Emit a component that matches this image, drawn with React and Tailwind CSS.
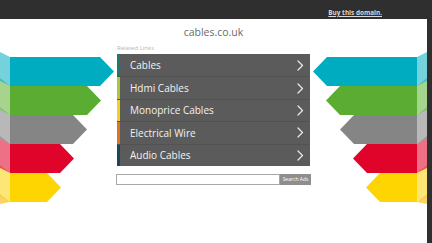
import React from "react";

const rows = [
  { label: "Cables", bar: "#1e7a6a" },
  { label: "Hdmi Cables", bar: "#a8c83a" },
  { label: "Monoprice Cables", bar: "#f2d21a" },
  { label: "Electrical Wire", bar: "#e07420" },
  { label: "Audio Cables", bar: "#17495a" },
];

const arrows = [
  { c: "#00adc0", l: "#74d2dc", m: "#3fb9b8", tipL: 114, tipR: 2 },
  { c: "#5aad32", l: "#a6d48c", m: "#7fba70", tipL: 101, tipR: 15 },
  { c: "#858585", l: "#b8b8b8", m: "#9a8f8f", tipL: 87, tipR: 29 },
  { c: "#e0042a", l: "#ee7086", m: "#e8503a", tipL: 74, tipR: 42 },
  { c: "#fed500", l: "#fee676", m: "#f8c840", tipL: 61, tipR: 55 },
];

function LeftArrows() {
  return (
    <svg width="116" height="224" viewBox="0 0 116 224" className="shrink-0">
      {arrows.map((a, i) => {
        const t = 38 + i * 29;
        const b = t + 29;
        const mid = t + 14.5;
        return (
          <g key={i}>
            <polygon points={`0,${t - 5} 10,${t} 10,${b} 0,${b - 5}`} fill={a.l} />
            <polygon points={`0,${b - 8} 10,${b} 0,${b + 2}`} fill={a.m} opacity="0.8" />
            <polygon
              points={`10,${t} ${a.tipL - 14},${t} ${a.tipL},${mid} ${a.tipL - 14},${b} 10,${b}`}
              fill={a.c}
            />
          </g>
        );
      })}
    </svg>
  );
}

function RightArrows() {
  return (
    <svg width="116" height="224" viewBox="0 0 116 224" className="shrink-0">
      {arrows.map((a, i) => {
        const t = 38 + i * 29;
        const b = t + 29;
        const mid = t + 14.5;
        return (
          <g key={i}>
            <polygon points={`106,${t} 116,${t - 5} 116,${b - 5} 106,${b}`} fill={a.l} />
            <polygon points={`116,${b - 8} 106,${b} 116,${b + 2}`} fill={a.m} opacity="0.8" />
            <polygon
              points={`106,${t} ${a.tipR + 14},${t} ${a.tipR},${mid} ${a.tipR + 14},${b} 106,${b}`}
              fill={a.c}
            />
          </g>
        );
      })}
    </svg>
  );
}

function Chevron() {
  return (
    <svg width="8" height="11" viewBox="0 0 8 11" fill="none">
      <path d="M2 1 L6.5 5.5 L2 10" stroke="#e8e8e8" strokeWidth="1.3" strokeLinecap="round" strokeLinejoin="round" />
    </svg>
  );
}

export default function App() {
  return (
    <div
      className="w-[432px] h-[243px] bg-[#2f2f2f] flex flex-col overflow-hidden"
      style={{ fontFamily: '"Open Sans", "Noto Sans", sans-serif' }}
    >
      <div className="h-[19px] shrink-0 flex justify-end pr-[50px] pt-[8px]">
        <span className="text-[6.4px] leading-[9px] font-bold text-[#d8d8d8] underline">Buy this domain.</span>
      </div>
      <div className="flex flex-1 pr-[5px]">
        <div className="flex flex-1 bg-white">
          <LeftArrows />
          <div className="w-[195px] flex flex-col items-stretch">
            <div className="pt-[6px] h-[19px] text-center text-[10.5px] leading-[14px] text-[#6b6b6b]">cables.co.uk</div>
            <div className="mt-[6px] pl-[1px] text-[6px] leading-[8px] text-[#b5b5b5]">Related Links</div>
            <div className="mt-[2px] ml-[1px] mr-[1px] bg-[#5b5b5b] flex flex-col">
              {rows.map((r, i) => (
                <div
                  key={i}
                  className={`h-[22.4px] flex items-center ${i > 0 ? "border-t border-[#525252]" : ""}`}
                >
                  <div className="w-[3px] h-full" style={{ backgroundColor: r.bar }} />
                  <span className="ml-[10px] flex-1 text-[10px] leading-[12px] text-[#f2f2f2]">{r.label}</span>
                  <div className="mr-[6px]">
                    <Chevron />
                  </div>
                </div>
              ))}
            </div>
            <div className="mt-[8px] flex h-[11px]">
              <div className="flex-1 border border-[#a8a8a8] bg-white" />
              <div className="w-[31px] bg-[#8e8e8e] flex items-center justify-center text-[5px] text-white">
                Search Ads
              </div>
            </div>
          </div>
          <RightArrows />
        </div>
      </div>
    </div>
  );
}
